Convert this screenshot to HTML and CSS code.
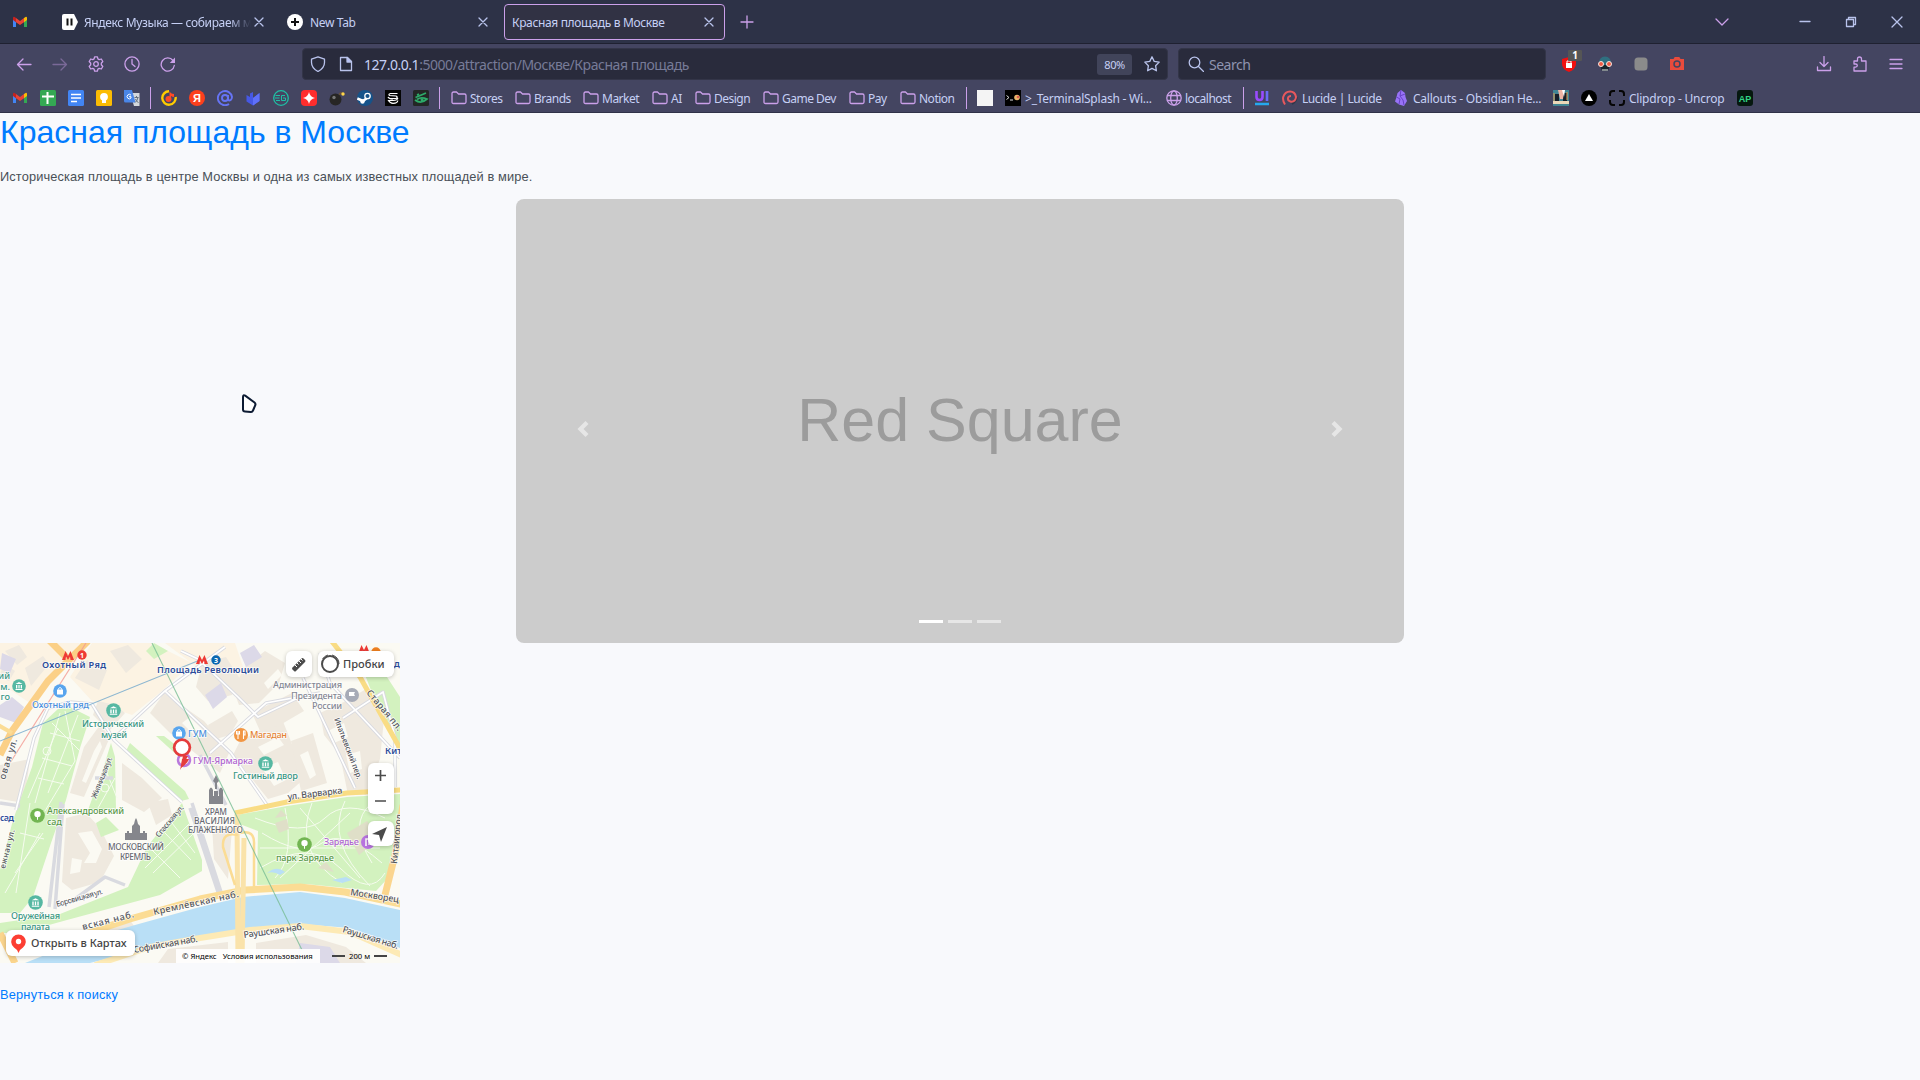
FILE: index.html
```html
<!DOCTYPE html>
<html lang="ru">
<head>
<meta charset="utf-8">
<title>Красная площадь в Москве</title>
<link rel="stylesheet" href="styles.css">
</head>
<body>
<svg class="defs" width="0" height="0">
  <defs>
    <symbol id="gmail" viewBox="0 0 16 16"><path fill="#4285f4" d="M1 4v9h3V7z"/><path fill="#34a853" d="M12 7v6h3V4z"/><path fill="#fbbc04" d="M12 4l1.500-1.100Q15 2.500 15 4v2l-3 2.200z"/><path fill="#ea4335" d="M4 8.200V4l4 3 4-3v4.200L8 11z"/><path fill="#c5221f" d="M1 4q0-1.500 1.600-1.100L4 4v4.200L1 6z"/></symbol>
    <symbol id="x" viewBox="0 0 16 16"><path d="M4 4l8 8M12 4l-8 8"/></symbol>
    <symbol id="folder" viewBox="0 0 16 16"><path d="M1 3.500q0-1.500 1.500-1.500h3l2 2h6q1.500 0 1.500 1.500v6.500q0 1.500-1.500 1.500h-11Q1 13.500 1 12z"/></symbol>
    <symbol id="museum" viewBox="0 0 14 14"><circle cx="7" cy="7" r="6.800" fill="#56b8a2"/><path d="M3.500 5L7 3l3.500 2zM4 6h1.300v3.500H4zM6.400 6h1.200v3.500H6.400zM8.700 6H10v3.500H8.700zM3.500 10h7v1h-7z" fill="#fff"/></symbol>
    <symbol id="bag" viewBox="0 0 14 14"><circle cx="7" cy="7" r="6.800" fill="#58a5ee"/><path d="M4 5.500h6v5H4z" fill="#fff"/><path d="M5.500 5.500V4.500q1.500-2 3 0v1" fill="none" stroke="#fff"/></symbol>
    <symbol id="tree" viewBox="0 0 14 14"><circle cx="7" cy="7" r="6.800" fill="#72b552"/><circle cx="7" cy="5.700" r="3" fill="#fff"/><path d="M6.500 7h1v4h-1z" fill="#fff"/></symbol>
    <symbol id="metro" viewBox="0 0 12 9"><path d="M0 9l3.500-9L6 5l2.500-5L12 9H8.500L8 5.500 6 9 4 5.500 3.500 9z" fill="#ee3a35"/></symbol>
  </defs>
</svg>

<header class="browser">
  <div class="tabs">
    <svg class="ico"><use href="#gmail"/></svg>
    <svg class="ico" viewBox="0 0 16 16"><path d="M2 0h10l4 8-4 8H2q-2 0-2-2V2q0-2 2-2z" fill="#fff"/><path d="M4.500 4.500h2v7h-2zM8.500 4.500h2v7h-2z" fill="#111"/></svg>
    <span class="tab-title faded">Яндекс Музыка — собираем м</span>
    <svg class="ico line pale"><use href="#x"/></svg>
    <svg class="ico" viewBox="0 0 16 16"><circle cx="8" cy="8" r="8" fill="#fff"/><path d="M8 4v8M4 8h8" stroke="#111" stroke-width="2"/></svg>
    <span class="tab-title">New Tab</span>
    <svg class="ico line pale"><use href="#x"/></svg>
    <div class="active-tab"><span>Красная площадь в Москве</span><svg class="ico line pale"><use href="#x"/></svg></div>
    <svg class="ico line" viewBox="0 0 16 16"><path d="M8 2v12M2 8h12"/></svg>
    <svg class="ico line" viewBox="0 0 16 16"><path d="M2 5l6 6 6-6"/></svg>
    <svg class="ico line pale" viewBox="0 0 16 16"><path d="M3 7.500h10"/></svg>
    <svg class="ico line pale" viewBox="0 0 16 16"><path d="M3.500 5.500h7v7h-7zM5.500 5.500v-2h7v7h-2"/></svg>
    <svg class="ico line pale" viewBox="0 0 16 16"><path d="M3 3l10 10M13 3L3 13"/></svg>
  </div>

  <div class="nav">
    <svg class="ico line" viewBox="0 0 16 16"><path d="M15 8.500H1.500M7 3L1.500 8.500 7 14"/></svg>
    <svg class="ico line dim" viewBox="0 0 16 16"><path d="M1 8.500h13.500M9 3l5.500 5.500L9 14"/></svg>
    <svg class="ico line" viewBox="0 0 16 16"><path d="M6.600.8h2.800l.5 2.100 1.300.7 2.100-.6 1.500 2.500-1.500 1.700v1.600l1.500 1.700-1.500 2.500-2.100-.6-1.300.7-.5 2.100H6.600l-.5-2.100-1.300-.7-2.100.6-1.500-2.500 1.500-1.700V7.200L1.200 5.500 2.700 3l2.100.6 1.300-.7z"/><circle cx="8" cy="8" r="2.300"/></svg>
    <svg class="ico line" viewBox="0 0 16 16"><circle cx="8" cy="8" r="7.100"/><path d="M8 3.500V8l3 2.500"/></svg>
    <svg class="ico line" viewBox="0 0 16 16"><path d="M14.300 9.500A6.600 6.600 0 1 1 13 4.500"/><path d="M15 1.500V7H9.800z" fill="#cba0ea" stroke="none"/></svg>
    <div class="urlbar">
      <svg class="ico line pale" viewBox="0 0 16 16"><path d="M8 .8l6.500 2.400v3.300q0 5.500-6.500 9-6.500-3.500-6.500-9V3.200z"/></svg>
      <svg class="ico line pale" viewBox="0 0 16 16"><path d="M2.500 1.500h7l4 4v9h-11z"/><path d="M9 1.500v4.500h4.500z" fill="#b4befe"/></svg>
      <span class="url"><b>127.0.0.1</b>:5000/attraction/Москве/Красная площадь</span>
      <span class="zoom">80%</span>
      <svg class="ico line pale" viewBox="0 0 16 16"><path d="M8 .8l2.200 4.600 5 .7-3.600 3.600.8 5.100L8 12.400l-4.400 2.400.8-5.100L.8 6.100l5-.7z"/></svg>
    </div>
    <div class="searchbar">
      <svg class="ico line pale" viewBox="0 0 16 16"><circle cx="6.500" cy="6.500" r="5.300"/><path d="M10.500 10.500L15.500 15.500"/></svg>
      <span>Search</span>
    </div>
    <div class="shield"><svg class="ico" viewBox="0 0 16 16"><path d="M8 1l7 2v5q0 5-7 8-7-3-7-8V3z" fill="#f01010"/><path d="M5 7h6v5H5z" fill="#fff"/><path d="M6 7V5h4v2" fill="none" stroke="#fff"/></svg><span class="badge">1</span></div>
    <svg class="ico" viewBox="0 0 16 16"><path d="M2 7q0-6 6-6.500 6 .5 6 6.500v2H2z" fill="#2f6f80"/><path d="M3 9h10l-2 6H5z" fill="#17252c"/><circle cx="4" cy="8" r="2.500" fill="#ef5b45" stroke="#f4e6df"/><circle cx="12" cy="8" r="2.500" fill="#ef5b45" stroke="#f4e6df"/><path d="M6 13v2M8 13v2M10 13v2" stroke="#eee"/></svg>
    <svg class="ico" viewBox="0 0 16 16"><rect x="1.500" y="1.500" width="13" height="13" rx="3.500" fill="#8b8b8b"/></svg>
    <svg class="ico" viewBox="0 0 16 16"><path d="M1 3h3.500l1.200-2h4.600l1.200 2H15v11H1z" fill="#e94b3c"/><circle cx="8" cy="8" r="3" fill="none" stroke="#444561" stroke-width="1.500"/></svg>
    <svg class="ico line" viewBox="0 0 16 16"><path d="M8 .5v10M4 6.500l4 4 4-4M1.500 11v3.500h13V11"/></svg>
    <svg class="ico line" viewBox="0 0 16 16"><path d="M2 5h3.500V3q0-2 2-2t2 2v2H14v10H2v-3.800h1.500q1.800-.3 1.800-1.700T3.500 8H2z"/></svg>
    <svg class="ico line" viewBox="0 0 16 16"><path d="M2 3.500h12M2 8h12M2 12.500h12"/></svg>
  </div>

  <div class="bookmarks">
    <svg class="ico"><use href="#gmail"/></svg>
    <svg class="ico" viewBox="0 0 16 16"><rect width="16" height="16" rx="1.500" fill="#34a853"/><path d="M7.500 2v12M2 6.500h12" stroke="#fff" stroke-width="2"/></svg>
    <svg class="ico" viewBox="0 0 16 16"><rect width="16" height="16" rx="1.500" fill="#4285f4"/><path d="M3 4.500h10M3 8h10M3 11.500h6" stroke="#fff" stroke-width="1.700"/></svg>
    <svg class="ico" viewBox="0 0 16 16"><rect width="16" height="16" rx="1.500" fill="#fbbc04"/><circle cx="8" cy="6.800" r="3.900" fill="#fff"/><path d="M6 9h4v4H6z" fill="#fff"/></svg>
    <svg class="ico" viewBox="0 0 16 16"><path d="M6 3h9.500v13H10z" fill="#d4d7dc"/><path d="M0 0h8l3.500 12.500H1.500Q0 12.500 0 11z" fill="#4a86e8"/><path d="M7 5.200a2.200 2.200 0 1 0 0 2.800V6.700H5" fill="none" stroke="#fff"/><path d="M10.500 7.500h4M12.500 6v1.500M14 7.500q-1 4-3 5M11.500 9q1 3 3 3.500" fill="none" stroke="#66717d"/></svg>
    <i class="sep"></i>
    <svg class="ico" viewBox="0 0 16 16"><path d="M8 1.300A6.700 6.700 0 1 0 14.600 7" fill="none" stroke="#ffcc00" stroke-width="2.400"/><circle cx="7.500" cy="9" r="3" fill="#ff4a26"/><path d="M8.500 9V1q1 3 4.500 3v3q-2 0-3-1v3z" fill="#ff4a26"/></svg>
    <svg class="ico" viewBox="0 0 16 16"><circle cx="8" cy="8" r="8" fill="#fc3f1d"/><text x="8" y="12.300" class="fav white">Я</text></svg>
    <svg class="ico" viewBox="0 0 16 16" fill="none" stroke="#6674f5" stroke-width="1.900"><circle cx="8" cy="8" r="3"/><path d="M11 5v4q.5 2.300 2.500 1.200Q15 9 15 7A7.100 7.100 0 1 0 12 14"/></svg>
    <svg class="ico" viewBox="0 0 16 16"><path d="M1.500 5L5 7V3.500L8 2v6l6.500-5v8L8 15.500l-6.500-4z" fill="#4658e5"/><path d="M8 8l6.500-5v8L8 15.500z" fill="#5f70fa"/></svg>
    <svg class="ico" viewBox="0 0 16 16" fill="none" stroke="#1fbfa5"><circle cx="8" cy="8" r="7.300" stroke-width="1.300"/><path d="M2.500 5.500H7M2 8h4.500M3 10.500h4M8.500 5.500v5h4V8H10M8.500 5.500H12"/></svg>
    <svg class="ico" viewBox="0 0 16 16"><rect width="16" height="16" rx="4" fill="#ff2d2d"/><path d="M8 2q1 5 6 6-5 1-6 6-1-5-6-6 5-1 6-6z" fill="#fff"/></svg>
    <svg class="ico" viewBox="0 0 16 16"><circle cx="6.500" cy="9.500" r="6" fill="#272624"/><circle cx="5" cy="7.500" r="1.700" fill="#777"/><path d="M10 4.500l2-1.500 2 1" fill="none" stroke="#68533d" stroke-width="2"/><circle cx="14" cy="4" r="1.700" fill="#ffd54a"/></svg>
    <svg class="ico" viewBox="0 0 16 16"><circle cx="8" cy="8" r="8" fill="#16538a"/><path d="M.3 8.500L6 11l4-3" fill="none" stroke="#fff" stroke-width="2.600"/><circle cx="10.500" cy="6" r="2.700" fill="#16538a" stroke="#fff" stroke-width="1.300"/><circle cx="5.500" cy="11.500" r="2.200" fill="#fff"/></svg>
    <svg class="ico" viewBox="0 0 16 16"><path d="M0 0h16v16H0z" fill="#050505"/><path d="M12.500 3.500H5.500Q3 4 4.500 5.500L11 6q2.500 1.200 0 2.500H5M3 7Q4 9 8 9M12.800 8Q12.500 10.500 8 10.500H3.500Q5 13.300 8 13.300q4.500 0 4.800-2.800" fill="none" stroke="#fff" stroke-width="1.200"/></svg>
    <svg class="ico" viewBox="0 0 16 16"><rect width="16" height="16" rx="1.500" fill="#232725"/><path d="M2.500 7.500L13 3M4 5l2-1M2 10q6 4.500 12-1-6-2.500-10 .5" fill="none" stroke="#2dab69" stroke-width="1.700"/><circle cx="9" cy="9.700" r="1.500" fill="#2dab69"/></svg>
    <i class="sep"></i>
    <span class="bm short"><svg class="ico line"><use href="#folder"/></svg>Stores</span>
    <span class="bm short"><svg class="ico line"><use href="#folder"/></svg>Brands</span>
    <span class="bm short"><svg class="ico line"><use href="#folder"/></svg>Market</span>
    <span class="bm short"><svg class="ico line"><use href="#folder"/></svg>AI</span>
    <span class="bm short"><svg class="ico line"><use href="#folder"/></svg>Design</span>
    <span class="bm short"><svg class="ico line"><use href="#folder"/></svg>Game Dev</span>
    <span class="bm short"><svg class="ico line"><use href="#folder"/></svg>Pay</span>
    <span class="bm short"><svg class="ico line"><use href="#folder"/></svg>Notion</span>
    <i class="sep"></i>
    <svg class="ico" viewBox="0 0 16 16"><path d="M0 0h16v16H0z" fill="#f4f4f4"/></svg>
    <span class="bm"><svg class="ico" viewBox="0 0 16 16"><path d="M0 0h16v16H0z"/><path d="M1.500 5.500l2.500 2-2.500 2M5 10h3" fill="none" stroke="#ddd"/><circle cx="12" cy="7.500" r="2.800" fill="#e8b56a"/><circle cx="13" cy="7" r="1.300" fill="#da5a50"/></svg>&gt;_TerminalSplash - Wi...</span>
    <span class="bm short"><svg class="ico line" viewBox="0 0 16 16"><circle cx="8" cy="8" r="7.200"/><ellipse cx="8" cy="8" rx="3.300" ry="7.200"/><path d="M1.500 5.500h13M1.500 10.500h13"/></svg>localhost</span>
    <i class="sep"></i>
    <svg class="ico" viewBox="0 0 16 16"><path d="M2.500 1v6q0 3 3 3t3-3V1" fill="none" stroke="#9a4bff" stroke-width="2.600"/><path d="M13 1v10" stroke="#6b6cf8" stroke-width="2.600"/><path d="M1 14h14" stroke="#25a8ef" stroke-width="2.500"/></svg>
    <span class="bm lucide"><svg class="ico" viewBox="0 0 16 16" fill="none" stroke-width="2"><path d="M10 14Q15 11 14.500 7" stroke="#2d3748"/><path d="M3 14.500Q.500 11 1.200 7 3 1.500 8 1.500T14 7q-.5 5-5 4.700Q5.500 11 6 8q.6-2 3-2" stroke="#e8585d"/></svg>Lucide | Lucide</span>
    <span class="bm"><svg class="ico" viewBox="0 0 16 16"><path d="M8 0l4 3 .5 4 1.500 4-3 5-5-1.500-4-3L3.500 7l1-4z" fill="#9873f7"/><path d="M8 0l-1 6 3 4 1 5M3.500 7L7 9l-1 5M7 6l5-2" fill="none" stroke="#6841c7"/></svg>Callouts - Obsidian He...</span>
    <svg class="ico" viewBox="0 0 16 16"><path d="M0 0h16v16H0z" fill="#418594"/><path d="M2 4h4v8H2zM10 3h4v9h-4z" fill="#17202a"/><path d="M5 0h6l-1 9H7z" fill="#efb5a4"/><path d="M9 0h3l-1 7z" fill="#fff"/><path d="M0 11h16v3H0z" fill="#ead8b8"/><path d="M1 3v8M14 2v8" stroke="#e69a4b"/></svg>
    <svg class="ico" viewBox="0 0 16 16"><circle cx="8" cy="8" r="8"/><path d="M8 4l4 7H4z" fill="#fff"/></svg>
    <span class="bm"><svg class="ico" viewBox="0 0 16 16" fill="none" stroke="#050505" stroke-width="2"><path d="M1 6V4q0-3 3-3h2M10 1h2q3 0 3 3v2M15 10v2q0 3-3 3h-2M6 15H4q-3 0-3-3v-2"/></svg>Clipdrop - Uncrop</span>
    <svg class="ico" viewBox="0 0 16 16"><rect width="16" height="16" rx="3" fill="#06180f"/><text x="8" y="11.500" class="fav ap">AP</text></svg>
  </div>
</header>

<main class="page">
  <h1>Красная площадь в Москве</h1>
  <p class="lead">Историческая площадь в центре Москвы и одна из самых известных площадей в мире.</p>

  <section class="carousel">
    <svg class="arrow" viewBox="0 0 8 8"><path d="M5.250 0l-4 4 4 4 1.500-1.500L4.250 4l2.500-2.500z"/></svg>
    <div class="slide-title">Red Square</div>
    <svg class="arrow" viewBox="0 0 8 8"><path d="M2.750 0l-1.500 1.500L3.750 4l-2.500 2.500L2.750 8l4-4z"/></svg>
    <div class="dots"><i class="on"></i><i></i><i></i></div>
  </section>

  <section class="map">
    <svg class="tiles" width="400" height="320" viewBox="0 0 400 320">
      <path fill="#fbfaf3" d="M0 0h400v320H0z"/>
      <g fill="#fcf3e3"><path d="M0 0h80L30 60 0 40zM92 0h60l40 20-30 28-30 24-40-14-22-24zM165 0h70l10 30-20 15-40-30z"/></g>
      <g fill="#efe9df">
        <path d="M5 8l14-6 8 12-10 8zM25 25l18-12 6 8-18 22zM3 20l12 8-6 10-9-4zM75 35l12-18 20 10-8 20zM110 8l18-6 14 14-16 14zM98 58l17 4 10 8-16 18-16-16z"/>
        <path d="M164 50l40 28 26 30-10 22-50-40-20-20zM240 98l42-22 8 20 14 40-16 14-20 6-35-44zM208 82l24-14 6 10-8 14-14 4zM202 20l24-6 14 22-8 16-24 6-12-14zM245 24l20-16 20 12-6 20-20 20-20 2-6-16z"/>
        <path d="M252 70l40-20 12 18-24 14-20 6zM291 98l22-8 14 50-26 8zM320 70l26-12 20-12 18 30-4 40-14 36h-18l-8-40-16-20z"/>
        <path d="M100 82l10 12-26 60-14-4 14-46zM0 122l30-6-6 44-24-4zM66 175l20-5 14 15 14 28-14 26-28 8-10-8zM122 120l20 15 20 20-18 14-22-12zM60 295l70-18 4 6-58 18zM148 160l20-4 4 16-16 10z"/>
        <path d="M158 320l10-14 60-7v21zM256 300l50-8 40 12 20 16H256zM212 182l20 4-4 50-14-20zM372 170l18-14 6 22-8 34-14-8z"/>
      </g>
      <g fill="#fbfaf3"><path d="M264 40l14-14 4 6-14 14zM258 104l20-10 6 8-20 10zM262 125l16-6 8 18-12 6zM328 88l16-8 4 14-14 6zM346 112l14-4 2 18-12 4zM182 80l8-6 16 16-8 6zM78 190l14-2 10 18-6 14h-12l6-10zM72 215l10 2-2 12-10 2zM300 112l8-4 8 24-6 4zM94 108l6-10 2 6-16 36-4-2z"/></g>
      <g fill="#dcd9e8"><path d="M0 62l12-8 12 10-8 16-16-6zM2 10l14 6-6 14-10-4zM205 52l16-12 6 14-14 12zM240 10l14-8 8 12-16 10zM300 300l30 4 10 16h-44z"/></g>
      <g fill="#d3f2bf">
        <path d="M58 66l12-2 20 10-10 31-14 52-15 43-18 54-13 16H0v-43l13-50 19-53 11-44z"/>
        <path d="M111 100l4 14 1 53H88l16-44zM96 180l10-6 13 13-18 7zM128 244l19-40 35-44 20 57v11l-42 24-93 25-47 13H0v-10l60-9z"/>
        <path d="M237 172l50-9 60-9 53-3v30l-12 54-12 13-70-7-49 1 1-54-21-8zM358 14l16 0 26 40v56l-24-50zM146 8l8-8 14 8-14 8zM156 93l8 0 18 14-4 6zM130 100l55 48 4 8-8 2-55-50z"/>
      </g>
      <g fill="none" stroke="#f6fcef" stroke-width="1">
        <path d="M60 70L35 160M78 72L48 150M50 90l30 8M42 115l30 8M52 80l28 28M28 155l30-70M65 68l10 50-30 50M38 135l26 6M20 190l24 6M15 230l28-40M5 250l35-60M30 160l-14 90M98 165l17-30M105 125l12 30"/>
        <circle cx="47" cy="108" r="4"/><circle cx="105" cy="145" r="4"/>
        <path d="M145 225l44-44M153 230l42-41M150 205l30 30M165 190l26 27M172 180l23 30"/>
        <path d="M255 175q50 20 70 0t60 0M262 190q40 25 60 10t60 20M260 225q50-30 80 0t45 5M285 165q10 50-10 70M312 160q-20 50 30 80M345 158q-20 40 25 85M372 160q-25 20 0 60M260 205h120M300 165l60 70M350 170l-70 65"/>
      </g>
      <g fill="#dfdfc8"><path d="M347 190l20-12 12 18-20 16zM275 180l12-4 2 10-10 4zM275 175l6-8 6 6zM318 225l8-6 8 10z"/></g>
      <path fill="#b9dff6" d="M25 320l55-22 55-16 65-18 43-10 57-5 45 6 55 12v38l-50-20-50-4-60 6-40 6-50 12-60 15zM267 230q10-8 18-1l-5 3q-6-4-13-2zM332 237l14-3 6 3-10 3z"/>
      <g fill="none" stroke="#d9dae0" stroke-width="3.500" stroke-linejoin="round">
        <path d="M16 167l18-72 14-30 22-6 22 2 22 36 46 42 22 20M113 96l52-48 66 62 38 55M165 48l60-44M181 8l17 8 40 38 20 20 42-20M210 110l56-50 54-10M55 266l8-105M49 264l12-105M200 112l26 50M125 242l-20-8-30 22M190 165l30 90M192 160l30 92M303 35l52 110M343 75l40-26 12 45v50M0 160l20 3M113 135H95M320 10l10 30 70 75"/>
      </g>
      <g fill="none" stroke="#fff" stroke-width="1.700"><path d="M16 167l18-72 14-30 22-6 22 2 22 36 46 42 22 20M113 96l52-48 66 62 38 55M165 48l60-44M181 8l17 8 40 38 20 20 42-20M210 110l56-50 54-10M303 35l52 110M343 75l40-26 12 45v50M320 10l10 30 70 75"/></g>
      <g fill="none" stroke="#fbdc94" stroke-width="7" stroke-linejoin="round">
        <path d="M88-2L48 38 12 88 0 112M48-4L66 14" stroke="#fbd087"/>
        <path d="M-2 82l14 8" stroke-width="4"/>
        <path d="M82 292l48-16 70-20 45-9 55-3 45 5 60 13"/>
        <path d="M95 322l55-18 50-9 50-8 50-4 50 6 52 23" stroke="#fdeab5" stroke-width="6"/>
        <path d="M235 170l52-11 60-9 55-3M330-4l30 38 42 75" stroke="#f9dc84" stroke-width="5"/>
        <path d="M237 171l1 150M244 195l-2 125" stroke="#fae3aa" stroke-width="5"/>
        <path d="M238 192q-16-4-15 12l12 38M240 190q15-4 14 12v42" stroke-width="2.500"/>
        <path d="M385 252l10-40 8-50M0 290l15 30" stroke="#fbd58d"/>
      </g>
      <path d="M86 0L10 120" stroke="#f39b93" stroke-width="1.200" opacity=".8"/><path d="M0 98L200 17" stroke="#73a9cd" stroke-width="1.100" opacity=".8"/><path d="M152 0l150 307" stroke="#77bd94" stroke-width="1.100" opacity=".8"/>

      <g class="lbl">
        <g fill="#2b4c99" class="strong"><text x="42" y="25" textLength="64">Охотный Ряд</text><text x="157" y="30" textLength="102">Площадь Революции</text><text x="385" y="111">Кит</text><text x="0" y="178" textLength="14">сад</text><text x="394" y="24">д</text></g>
        <g fill="#389683"><text x="10" y="36" class="end">ий</text><text x="10" y="47" class="end">м.</text><text x="10" y="57" class="end">го</text><text x="82" y="84" textLength="62">Исторический</text><text x="101" y="94.500" textLength="26">музей</text><text x="233" y="136" textLength="65">Гостиный двор</text><text x="11" y="276" textLength="49">Оружейная</text><text x="21" y="287" textLength="29">палата</text></g>
        <g fill="#4b8fdd"><text x="32" y="65" textLength="57">Охотный ряд</text><text x="188" y="94" textLength="19">ГУМ</text></g>
        <g fill="#af66cf"><text x="193" y="121" textLength="60">ГУМ-Ярмарка</text><text x="324" y="202" textLength="35">Зарядье</text></g>
        <text x="250" y="95" textLength="37" fill="#e58434">Магадан</text>
        <g fill="#858894"><text x="273" y="45" textLength="69">Администрация</text><text x="291" y="56" textLength="51">Президента</text><text x="312" y="66" textLength="30">России</text></g>
        <g fill="#5b994a"><text x="47" y="171" textLength="77">Александровский</text><text x="47" y="182" textLength="15">сад</text><text x="276" y="218" textLength="58">парк Зарядье</text></g>
        <g fill="#686a72" class="caps"><text x="108" y="207" textLength="56">МОСКОВСКИЙ</text><text x="120" y="216.500" textLength="31">КРЕМЛЬ</text><text x="205" y="172" textLength="22">ХРАМ</text><text x="194" y="181" textLength="41">ВАСИЛИЯ</text><text x="188" y="190" textLength="55">БЛАЖЕННОГО</text></g>
        <g fill="#55575d">
          <text transform="translate(366 50) rotate(50)" textLength="50">Старая пл.</text>
          <text transform="translate(334 76) rotate(69)" textLength="65" class="sm">Ипатьевский пер.</text>
          <text transform="translate(288 157) rotate(-7)" textLength="55">ул. Варварка</text>
          <text transform="translate(96 156) rotate(-68)" textLength="44" class="sm">Житницкая ул.</text>
          <text transform="translate(5 137) rotate(-73)" textLength="42">овая ул.</text>
          <text transform="translate(5 226) rotate(-76)" textLength="40" class="sm">ежная ул.</text>
          <text transform="translate(159 195) rotate(-50)" textLength="39" class="sm">Спасская ул.</text>
          <text transform="translate(57 264) rotate(-16)" textLength="48" class="sm">Боровицкая ул.</text>
          <text transform="translate(83 287) rotate(-14)" textLength="53">вская наб.</text>
          <text transform="translate(154 272) rotate(-12)" textLength="87">Кремлёвская наб.</text>
          <text transform="translate(134 310) rotate(-10)" textLength="65">Софийская наб.</text>
          <text transform="translate(350 252) rotate(9)" textLength="49">Москворец</text>
          <text transform="translate(244 295) rotate(-8)" textLength="61">Раушская наб.</text>
          <text transform="translate(342 289) rotate(17)" textLength="58">Раушская наб.</text>
          <text transform="translate(397 221) rotate(-84)" textLength="50">Китайгород</text>
        </g>
      </g>
      <use href="#metro" x="62" y="8" width="12" height="9"/><circle cx="82" cy="12" r="4.700" fill="#ee3a35"/><text x="82" y="15" class="num">1</text>
      <use href="#metro" x="196" y="12" width="12" height="9"/><circle cx="216" cy="17" r="4.700" fill="#0a67b1"/><text x="216" y="20" class="num">3</text>
      <use href="#metro" x="358" y="2" width="12" height="9"/><circle cx="376" cy="9" r="4.700" fill="#f08020"/>
      <use href="#museum" x="12" y="36" width="14" height="14"/><use href="#museum" x="106" y="60" width="15" height="15"/><use href="#museum" x="258" y="113" width="15" height="15"/><use href="#museum" x="28" y="252" width="15" height="15"/>
      <use href="#bag" x="53" y="41" width="14" height="14"/><use href="#bag" x="172" y="83" width="14" height="14"/><use href="#tree" x="30" y="165" width="15" height="15"/><use href="#tree" x="297" y="194" width="15" height="15"/>
      <circle cx="241" cy="92" r="7" fill="#f29745"/><path d="M238 88v8M243.500 88v8M236.500 88v3h3v-3M243 88h2v4h-2" fill="none" stroke="#fff" stroke-width="1.100"/>
      <circle cx="352" cy="52" r="7" fill="#a7abb7"/><path d="M349 56v-7h6l-1 2 1 2h-6z" fill="#fff"/>
      <circle cx="184" cy="117" r="6" fill="none" stroke="#b979dc" stroke-width="2.500"/><circle cx="368" cy="199" r="7" fill="#b873df"/><path d="M366 203v-7h3v6" fill="none" stroke="#fff" stroke-width="1.500"/>
      <g fill="#85868c"><path d="M132 190v-7l2-2 1-4 1-2 1 2 1 4 2 2v7h3v-2h2v2h2v7h-22v-7h2v-2h2v2z"/><path d="M215 146v-6l-2-2 3-6 3 6-2 2v6zM209 147q2-5 4 0v12h-4zM219 147q2-5 4 0v12h-4zM214 148h4v11h-4zM209 153h14v8h-14z"/></g>
      <path d="M181 125l1-9h7q-2 5-8 9z" fill="#e53c3c"/><circle cx="182" cy="104.500" r="9.200" fill="#e53c3c"/><circle cx="182" cy="104.500" r="6.500" fill="#fff"/>
      <path d="M180 127l3-14h5z" fill="#e53c3c"/>
    </svg>
    <div class="card ruler"><svg width="16" height="16" viewBox="0 0 16 16"><path d="M1.500 11.500l9-9q1-1 2 0l1.500 1.500q1 1 0 2l-9 9q-1 1-2 0l-1.500-1.500q-1-1 0-2z" fill="#4b4b4b"/><path d="M4 9l2 2M6 7l1.500 1.500M8 5l2 2M10 3l1.500 1.500" stroke="#fff"/></svg></div>
    <div class="card traffic"><svg width="20" height="20" viewBox="0 0 20 20" fill="none"><circle cx="10" cy="10" r="8" stroke="#4b4b4b" stroke-width="2"/><path d="M2.500 5A9 9 0 0 1 8 1M12 1q7 2 7 9" stroke="#4b4b4b"/></svg><span>Пробки</span></div>
    <div class="card scale"><svg width="26" height="51" viewBox="0 0 26 51"><path d="M7 12.500h11M12.500 7v11M7 38h11" stroke="#4b4b4b" stroke-width="1.700"/></svg></div>
    <div class="card geo"><svg width="26" height="26" viewBox="0 0 26 26"><path d="M4 13L19 6l-6 15-2-7z" fill="#4b4b4b"/></svg></div>
    <div class="card open"><svg width="15" height="19" viewBox="0 0 15 19"><path d="M7.500 19Q6.500 15.500 3 13.500a7.300 7.300 0 1 1 9 0Q8.500 15.500 7.500 19z" fill="#fc3f33"/><circle cx="7.500" cy="7.500" r="2.700" fill="#fff"/></svg><span>Открыть в Картах</span></div>
    <div class="copy"><span>© Яндекс</span><span>Условия использования</span></div>
    <div class="distance"><i></i><span>200 м</span><i></i></div>
  </section>

  <a class="back">Вернуться к поиску</a>
  <svg class="cursor" width="18" height="22" viewBox="0 0 18 22"><path d="M2 4q0-2.500 2.200-1.300l9.300 6.800q1.300 1.200.9 2.500l-2.400 5.500q-.7 1.700-2.200 1.500l-5.800-.6q-2 0-2-2z" fill="#fff" stroke="#0d1b33" stroke-width="2"/></svg>
</main>
</body>
</html>
```

FILE: styles.css
```css
* { box-sizing: border-box; }
body { margin: 0; width: 1920px; height: 1080px; overflow: hidden; background: #f8f9fc; font-family: "Liberation Sans", Arial, sans-serif; }
.defs { position: absolute; }

/* browser frame */
.browser { height: 113px; background: #444561; border-bottom: 1px solid #303248; color: #c6d0f5; font: 12px "Noto Sans", "Open Sans", sans-serif; white-space: nowrap; }
.ico { display: block; flex: none; width: 16px; height: 16px; }
.line { fill: none; stroke: #cba0ea; stroke-width: 1.3; stroke-linecap: round; stroke-linejoin: round; }
.pale { stroke: #b9c3ec; }
.dim { opacity: .4; }

.tabs { display: grid; grid-template-columns: 50px 22px 167px 36px 23px 165px 29px 235px 975px 83px 46px 46px 16px; align-items: center; height: 44px; padding: 1px 0 0 12px; background: #2d3247; border-bottom: 1px solid #1f2131; }
.tab-title, .active-tab span { letter-spacing: -.35px; }
.tab-title { padding-top: 1px; }
.faded { width: 168px; -webkit-mask-image: linear-gradient(90deg, #000 145px, transparent 167px); mask-image: linear-gradient(90deg, #000 145px, transparent 167px); }
.active-tab { display: flex; align-items: center; justify-content: space-between; width: 221px; height: 36px; padding: 0 7px; border: 1px solid #cba0ea; border-radius: 4px; background: #313244; }

.nav { display: grid; grid-template-columns: 36px 36px 36px 36px 142px 876px 383px 36px 36px 36px 147px 36px 36px 16px; align-items: center; height: 40px; padding-left: 16px; }
.urlbar, .searchbar { display: flex; align-items: center; height: 32px; border: 1px solid #333548; border-radius: 4px; background: #292b3c; }
.urlbar { width: 866px; padding: 0 7px; }
.url { flex: 1; margin-left: 10px; color: #777b98; font-size: 14px; letter-spacing: -.46px; }
.urlbar .ico + .ico { margin-left: 12px; }
.url b { color: #c6d0f5; font-weight: 400; }
.zoom { width: 35px; height: 21px; margin-right: 12px; border-radius: 3px; background: #41445a; text-align: center; font-size: 11px; line-height: 21px; letter-spacing: -.4px; }
.searchbar { width: 368px; gap: 5px; padding-left: 9px; color: #8f94b0; font-size: 14px; letter-spacing: -.5px; }
.shield { position: relative; }
.badge { position: absolute; left: 7px; top: -6px; width: 14px; height: 11px; border-radius: 1px; background: #555; color: #fff; font: bold 10px/11px "Noto Sans", sans-serif; text-align: center; }

.bookmarks { display: grid; grid-template-columns: 28px 28px 28px 28px 26px 11px 28px 28px 28px 28px 28px 28px 28px 28px 28px 26px 12px 64px 68px 69px 43px 68px 86px 51px 66px 11px 28px 161px 77px 11px 28px 111px 160px 28px 28px 128px 16px; align-items: center; height: 28px; padding-left: 12px; }
.sep { width: 1px; height: 22px; background: #cba0ea; }
.bm { display: flex; align-items: center; gap: 4px; letter-spacing: -.23px; }
.short { gap: 3px; letter-spacing: -.5px; }
.lucide { letter-spacing: -.45px; }
.fav { font: bold 11px "Liberation Sans", sans-serif; text-anchor: middle; letter-spacing: 0; }
.white { fill: #fff; }
.ap { fill: #32d584; font-size: 9px; }

/* attraction page */
.page { display: flex; flex-direction: column; align-items: flex-start; color: #495057; }
h1 { margin: 0 0 16px; color: #007bff; font-size: 32px; font-weight: 400; line-height: 38px; }
.lead { margin: 0 0 13px; font-size: 12.8px; line-height: 19px; letter-spacing: .12px; }
.carousel { position: relative; display: flex; align-items: center; justify-content: space-between; align-self: center; width: 888px; height: 444px; padding: 16px 59px 0; border-radius: 8px; background: #ccc; }
.arrow { width: 16px; height: 16px; fill: #e6e6e6; }
.slide-title { margin-bottom: 18px; color: #9c9c9c; font-size: 61px; line-height: 70px; }
.dots { position: absolute; left: 403px; bottom: 20px; display: flex; gap: 5px; }
.dots i { width: 24px; height: 3px; background: #e6e6e6; }
.dots .on { background: #fff; }

.map { position: relative; width: 400px; height: 320px; overflow: hidden; font-family: "Noto Sans", sans-serif; }
.tiles { display: block; }
.lbl { font-size: 9.2px; font-weight: 500; paint-order: stroke; stroke: rgba(255,255,255,.75); stroke-width: 1.6px; }
.strong { font-weight: 600; }
.caps { font-size: 8.4px; }
.sm { font-size: 7.8px; }
.end { text-anchor: end; }
.num { fill: #fff; font-size: 7px; font-weight: 700; text-anchor: middle; }
.card { position: absolute; display: flex; align-items: center; border-radius: 6px; background: #fff; box-shadow: 0 1px 4px rgba(0,0,0,.22); color: #444; }
.card span { margin-top: -2px; }
.ruler { left: 286px; top: 8px; width: 26px; height: 26px; padding-left: 5px; }
.traffic { left: 318px; top: 8px; width: 76px; height: 26px; gap: 3px; padding-left: 2px; font-size: 11.100px; font-weight: 500; }
.scale { left: 368px; top: 120px; width: 26px; height: 51px; }
.geo { left: 368px; top: 178px; width: 26px; height: 25px; }
.open { left: 6px; top: 287px; width: 129px; height: 26px; gap: 5px; padding-left: 5px; font-size: 11px; font-weight: 500; white-space: nowrap; }
.copy, .distance { position: absolute; top: 306px; display: flex; align-items: center; height: 14px; color: #000; font-size: 7.7px; white-space: nowrap; }
.copy { left: 176px; width: 144px; gap: 6px; padding-left: 6px; background: rgba(255,255,255,.9); }
.distance { left: 332px; gap: 4px; }
.distance i { width: 13px; height: 2px; background: #444; }

.back { margin-top: 22px; color: #007bff; font-size: 12.8px; line-height: 19px; letter-spacing: .2px; }
.cursor { position: absolute; left: 241px; top: 393px; }
```
